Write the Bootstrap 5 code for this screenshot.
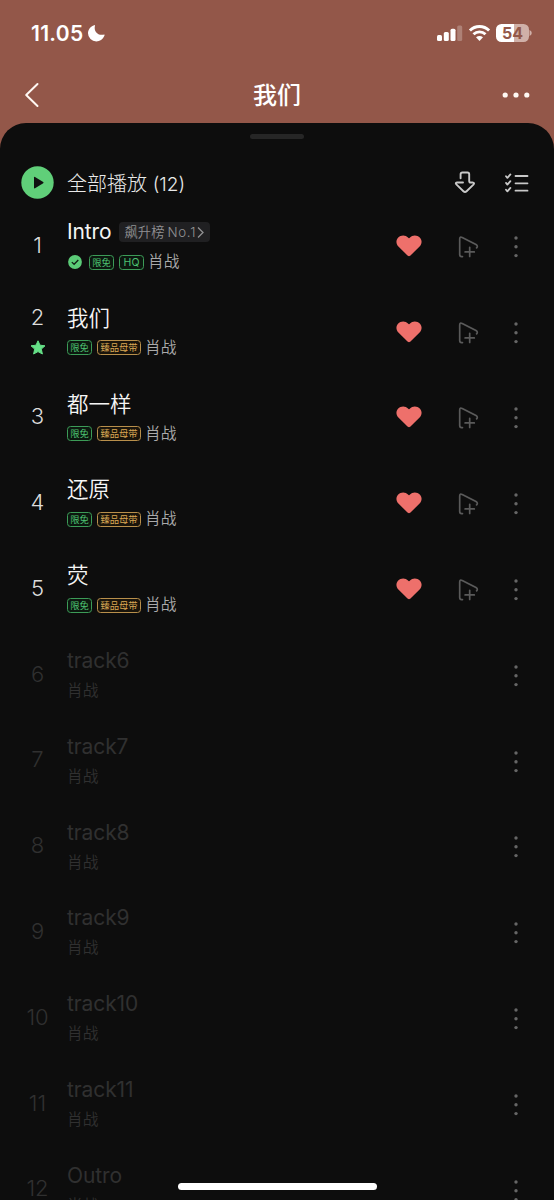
<!DOCTYPE html>
<html lang="zh-CN">
<head>
<meta charset="utf-8">
<meta name="viewport" content="width=device-width, initial-scale=1">
<title>我们</title>
<link href="https://cdn.jsdelivr.net/npm/bootstrap@5.3.0/dist/css/bootstrap.min.css" rel="stylesheet">
<style>
html,body{height:1200px;overflow:hidden}
body{background:#935749;color:#fff;font-family:Inter,"Noto Sans CJK SC",sans-serif;width:554px}
svg{display:block;flex:none}
.status{height:66px;padding:0 22px 0 31px}
.clock{font-size:21px;font-weight:600;line-height:24px;letter-spacing:.3px;padding-top:2px}
.batt{width:33px;height:18px;border-radius:5.5px;background:linear-gradient(90deg,#fff 55%,#d0b0a8 55%);color:#935749;font-size:16px;font-weight:700;line-height:18px}
.topbar{height:57px;padding:0 24px}
.topbar h1{font-size:24px;font-weight:500;line-height:36px;padding-top:2px}
.sheet{height:1077px;background:#0d0d0d;border-radius:26px 26px 0 0;overflow:hidden}
.grip{width:54px;height:5px;border-radius:3px;background:#262626;margin:11px auto 0}
.playall{height:63px;padding:26px 25px 0 21px}
.playall .lbl{font-size:20px;font-weight:300;line-height:30px;margin-left:13px;margin-top:4px;color:#e9e9e9}
.playall .lbl small{font-size:19px}
.song{height:85.8px;color:#f5f5f5}
.num{width:75px;font-size:22px;font-weight:300;color:#ddd;text-align:center;line-height:28px}
.info{width:300px;margin-left:-8px;padding-top:15px}
.name{font-size:21.5px;line-height:30px;height:30px;font-weight:350}
.name .en{font-size:21px;font-weight:400;letter-spacing:-.1px}
.by{font-size:15.7px;font-weight:350;line-height:24px;height:24px;margin-top:3px;color:#aaa;gap:5px}
.by .artist{margin-left:-1px}
.off .by .artist{margin-left:0}
.chart{background:#202022;color:#919193;font-size:13.3px;line-height:20px;height:20px;border-radius:4px;padding:0 5px 0 6px;margin-left:7px}
.chart .rank{margin-left:3px;letter-spacing:.7px}
.tag{height:15px;border:1px solid #3c9b57;border-radius:3.5px;font-size:9.3px;font-weight:400;line-height:13px;width:25px;text-align:center;color:#4cc071;background:#0c170f;white-space:nowrap}
.tag.gold{width:44px;border-color:#b88f4b;color:#d9a754;background:#19140b}
.tag.hq{font-size:10.5px}
.off .num,.off .name,.off .by{color:#303030}
.act{color:#5a5a5a}
.homebar{position:absolute;left:178px;top:1183px;width:199px;height:7px;border-radius:4px;background:#fff}
</style>
</head>
<body>
<svg width="0" height="0" class="position-absolute">
<symbol id="heart" viewBox="0 0 26 22"><path d="M13 21.2C12.2 21.2 11.7 20.7 11 20L2.4 11.6C-.1 9-.2 5.1 2 2.7 4.8-.2 9.700-.1 12 2.6Q13 3.700 14 2.6C16.3-.1 21.200-.2 24 2.700 26.200 5.100 26.100 9 23.600 11.600L15 20C14.300 20.700 13.800 21.200 13 21.200Z" fill="#ee706b"/></symbol>
<symbol id="next" viewBox="0 0 22 24"><path d="M4.500 21.600H3.500Q1.700 21.600 1.700 19.600V4Q1.700 1.200 4.200 2.400L18 9.600Q20.300 11 18.600 12.900M11.700 12.300V21.500M7.100 16.900H16.300" fill="none" stroke="currentColor" stroke-width="1.700" stroke-linecap="round"/></symbol>
<symbol id="more" viewBox="0 0 4 22"><g fill="#666"><circle cx="2" cy="2" r="1.700"/><circle cx="2" cy="10.800" r="1.700"/><circle cx="2" cy="19.600" r="1.700"/></g></symbol>
</svg>
<header class="status d-flex align-items-center">
<span class="clock">11.05</span>
<svg style="margin-left:4px;margin-top:1px" width="19" height="19" viewBox="0 0 19 19"><path d="M7.200 1.200Q8.300.8 7.900 2C6.600 7.500 11 11.800 16.200 10.700Q18.200 10.100 17.400 11.800C15.800 15.700 12.800 17.500 9.300 17.500A8.300 8.300 0 0 1 1 9.300C1 5.500 3.600 2.400 7.200 1.200Z" fill="#fff"/></svg>
<svg class="ms-auto" width="26" height="18" viewBox="0 0 26 18"><g fill="#fff"><rect x="0" y="11" width="5" height="6" rx="1.500"/><rect x="6.800" y="8" width="5" height="9" rx="1.500"/><rect x="13.500" y="4.700" width="5" height="12.300" rx="1.500"/><rect x="20.200" y="1.500" width="5" height="15.500" rx="1.500" opacity=".25"/></g></svg>
<svg style="margin-left:5px" width="23" height="18" viewBox="0 0 23 18"><g fill="none" stroke="#fff" stroke-width="2.900"><path d="M1.900 6.500C7.300 1.100 15.700 1.100 21.100 6.500"/><path d="M5.500 10.300C8.900 7 14.100 7 17.500 10.300"/></g><path d="M8 13.300Q11.500 10.500 15 13.300L11.500 17Z" fill="#fff"/></svg>
<span class="batt text-center" style="margin-left:5px">54</span>
<svg class="ms-0" width="3" height="6" viewBox="0 0 3 6"><path d="M.5 0Q2.800 1 2.800 3T.5 6Z" fill="#d0b0a8"/></svg>
</header>
<nav class="topbar d-flex align-items-center justify-content-between">
<svg width="16" height="26" viewBox="0 0 16 26"><path d="M13.500 2 2.200 13 13.500 24" fill="none" stroke="#fff8f3" stroke-width="2" stroke-linecap="round" stroke-linejoin="round"/></svg>
<h1 class="m-0" style="margin-left:12px!important">我们</h1>
<svg width="28" height="6" viewBox="0 0 28 6"><g fill="#fff8f3"><circle cx="3.200" cy="3" r="2.600"/><circle cx="14" cy="3" r="2.600"/><circle cx="24.800" cy="3" r="2.600"/></g></svg>
</nav>
<main class="sheet">
<div class="grip"></div>
<div class="playall d-flex align-items-start">
<svg width="33" height="33" viewBox="0 0 33 33" style="margin-top:1px"><circle cx="16.500" cy="16.500" r="16.200" fill="#60cf79"/><path d="M14 10.900 22.200 16Q23 16.600 22.200 17.200L14 22.300Q13 22.800 13 21.600V11.600Q13 10.400 14 10.900Z" fill="#101010"/></svg>
<span class="lbl">全部播放 <small>(12)</small></span>
<svg class="ms-auto" style="margin-top:6px" width="22" height="23" viewBox="0 0 22 23"><path d="M6.600 7.200V3.300Q6.600 1.500 8.400 1.500H13.400Q15.200 1.500 15.200 3.300V9.900Q15.200 11.500 16.800 11.500H18.500Q21 11.800 19.400 13.600L12.600 20.200Q11 21.700 9.400 20.200L2.600 13.600Q.8 11.800 3 11.500H9" fill="none" stroke="#c8c8c8" stroke-width="1.900" stroke-linecap="round" stroke-linejoin="round"/></svg>
<svg style="margin-left:28px;margin-top:8px" width="25" height="20" viewBox="0 0 25 20"><g fill="none" stroke="#c8c8c8" stroke-width="1.800" stroke-linecap="round" stroke-linejoin="round"><path d="m2 3.200 1.400 1.700L6.400 1.400M2 9.900 3.400 11.600 6.400 8.100M2 16.700 3.400 18.400 6.400 14.900M11.500 3H23.500M11.500 10.300H23.500M11.500 17.700H23.500"/></g></svg>
</div>
<div id="songs"></div>
</main>
<div class="homebar"></div>
<script src="https://cdn.jsdelivr.net/npm/bootstrap@5.3.0/dist/js/bootstrap.bundle.min.js"></script>
<script>
const titles = ['Intro','我们','都一样','还原','荧','track6','track7','track8','track9','track10','track11','Outro'];
const free = '<span class="tag">限免</span>';
document.getElementById('songs').innerHTML = titles.map((t, i) => {
  const on = i < 5;
  const chart = i ? '' : `<span class="chart d-flex align-items-center">飙升榜<span class="rank">No.1</span><svg width="9" height="13" viewBox="0 0 9 13"><path d="m2 1.500 5 5-5 5" fill="none" stroke="currentColor" stroke-width="1.300"/></svg></span>`;
  const check = '<svg width="14" height="14" viewBox="0 0 14 14" style="margin:0 2px 0 1px"><circle cx="7" cy="7" r="6.900" fill="#5bcb77"/><path d="m3.800 7.100 2.300 2.200 4.200-4.300" fill="none" stroke="#102015" stroke-width="1.300"/></svg>';
  const tags = !on ? '' : i ? free + '<span class="tag gold">臻品母带</span>' : check + free + '<span class="tag hq">HQ</span>';
  const star = i === 1 ? '<svg class="mx-auto" width="16" height="15" viewBox="0 0 16 15" style="margin-top:9px"><path d="M8 .8 10 5.200 15 5.800 11.300 9.100 12.400 14 8 11.600 3.600 14 4.700 9.100 1 5.800 6 5.200Z" fill="#65e087" stroke="#65e087" stroke-linejoin="round"/></svg>' : '';
  const like = on ? '<svg width="26" height="22" style="margin-left:28.500px"><use href="#heart"/></svg><svg class="act" width="22" height="24" style="margin-left:36.500px;margin-top:2px"><use href="#next"/></svg>' : '';
  return `<div class="song d-flex ${on ? '' : 'off'}">
    <div class="num" style="padding-top:${i === 1 ? 15 : 28.6}px">${i + 1}${star}</div>
    <div class="info"><div class="name d-flex align-items-center"><span class="${/[a-z]/.test(t) ? 'en' : ''}">${t}</span>${chart}</div>
    <div class="by d-flex align-items-center">${tags}<span class="artist">肖战</span></div></div>
    <div class="d-flex align-items-center flex-grow-1 pt-1" style="margin-top:-2px">${like}<svg class="ms-auto" width="4" height="22" style="margin-right:36.500px;margin-top:2px"><use href="#more"/></svg></div>
  </div>`;
}).join('');
</script>
</body>
</html>
